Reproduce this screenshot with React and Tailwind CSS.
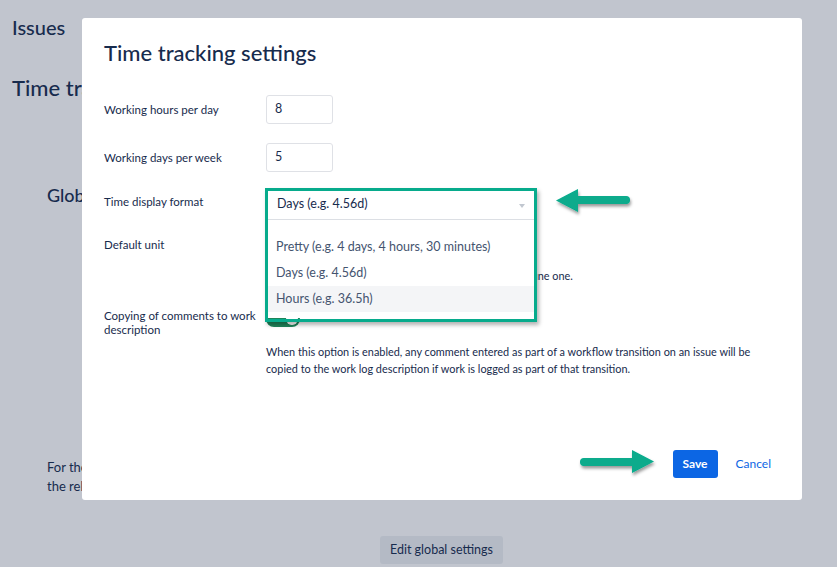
export default function App() {
  return (
    <div className="relative w-[837px] h-[567px] overflow-hidden bg-[#c1c5ce] text-[#172b4d] font-['Lato','Noto_Sans',sans-serif]">
      {/* Background page */}
      <div className="flex flex-col pl-[12px] pt-[14px]">
        <div className="text-[20px] leading-[26px] font-medium">Issues</div>
        <div className="mt-[34px] text-[22px] leading-[28px] font-medium">Time tracking</div>
        <div className="ml-[35px] mt-[81px] text-[18px] leading-[24px] font-medium">Global settings</div>
        <div className="ml-[35px] mt-[251px] text-[13px] leading-[19px]">
          <div>For these settings to take effect, reindexing may be required.</div>
          <div>the relevant projects use the global settings.</div>
        </div>
        <div className="ml-[368px] mt-[40px]">
          <button className="h-[28px] w-[123px] rounded-[3px] bg-[#b4bac5] text-[12.5px] text-[#172b4d] flex items-center justify-center">
            Edit global settings
          </button>
        </div>
      </div>

      {/* Modal */}
      <div className="absolute left-[82px] top-[18px] w-[720px] h-[482px] bg-white rounded-[3px] flex flex-col pl-[22px] pr-[31px] pb-[22px]">
        <div className="pt-[21px] text-[22px] leading-[28px] font-medium text-[#172b4d]">Time tracking settings</div>

        <div className="mt-[28px] flex flex-col text-[11.5px]">
          {/* Row 1 */}
          <div className="flex items-center">
            <div className="w-[162px]">Working hours per day</div>
            <div className="w-[67px] h-[29px] border border-[#dfe1e6] rounded-[3px] pl-[8px] flex items-center text-[12.5px]">8</div>
          </div>
          {/* Row 2 */}
          <div className="mt-[19px] flex items-center">
            <div className="w-[162px]">Working days per week</div>
            <div className="w-[67px] h-[29px] border border-[#dfe1e6] rounded-[3px] pl-[8px] flex items-center text-[12.5px]">5</div>
          </div>
          {/* Row 3 */}
          <div className="mt-[18px] flex items-start">
            <div className="w-[162px] pt-[5px] leading-[14px]">Time display format</div>
            <div className="relative w-[269px] h-[30px] bg-white border-b border-[#dcdfe4] flex items-center pl-[11px] text-[12.5px] text-[#172b4d]">
              Days (e.g. 4.56d)
              <div className="absolute right-[10px] top-[14px] w-0 h-0 border-l-[3.5px] border-r-[3.5px] border-t-[4px] border-l-transparent border-r-transparent border-t-[#c1c7d0]"></div>
              {/* Menu */}
              <div className="absolute left-0 top-[32px] w-[269px] bg-white pt-[12px] pb-[6px] flex flex-col text-[12.5px] text-[#44546f] z-10">
                <div className="h-[26px] flex items-center pl-[10px]">Pretty (e.g. 4 days, 4 hours, 30 minutes)</div>
                <div className="h-[26px] flex items-center pl-[10px]">Days (e.g. 4.56d)</div>
                <div className="h-[26px] flex items-center pl-[10px] bg-[#f4f5f7]">Hours (e.g. 36.5h)</div>
              </div>
            </div>
          </div>
          {/* Row 4 */}
          <div className="mt-[12px] flex items-start">
            <div className="w-[162px] pt-[6px] leading-[14px]">Default unit</div>
            <div className="flex flex-col">
              <div className="w-[269px] h-[29px] border border-[#dfe1e6] rounded-[3px] pl-[10px] flex items-center text-[12.5px]">Minutes</div>
              <div className="mt-[8px] leading-[14px] text-[10.85px] whitespace-nowrap">The default unit is for all time entered without a unit; define one.</div>
            </div>
          </div>
          {/* Row 5 */}
          <div className="mt-[26px] flex items-start">
            <div className="w-[162px] leading-[14px]">Copying of comments to work<br />description</div>
            <div className="flex flex-col">
              <div className="mt-[2px] w-[34px] h-[16px] rounded-full bg-[#1f845a] relative">
                <div className="absolute right-[2px] top-[2px] w-[12px] h-[12px] rounded-full bg-white"></div>
              </div>
              <div className="mt-[16px] text-[10.9px] leading-[17px] whitespace-nowrap">
                When this option is enabled, any comment entered as part of a workflow transition on an issue will be<br />
                copied to the work log description if work is logged as part of that transition.
              </div>
            </div>
          </div>
        </div>

        {/* Footer */}
        <div className="mt-auto flex items-center justify-end">
          <button className="w-[45px] h-[28px] rounded-[3px] bg-[#0c66e4] text-white text-[12px] font-bold flex items-center justify-center">Save</button>
          <button className="ml-[18px] text-[12px] text-[#0c66e4]">Cancel</button>
        </div>
      </div>

      {/* Annotation box */}
      <div className="absolute left-[265px] top-[188px] w-[272px] h-[134px] border-[3px] border-[#07ab8c] shadow-[2px_3px_4px_rgba(0,0,0,0.3)] z-20"></div>

      {/* Arrows */}
      <svg className="absolute left-0 top-0 z-20" width="837" height="567" viewBox="0 0 837 567">
        <defs>
          <filter id="sh" x="-20%" y="-50%" width="140%" height="200%">
            <feDropShadow dx="1" dy="2.5" stdDeviation="1.5" floodColor="#000" floodOpacity="0.4" />
          </filter>
        </defs>
        <g filter="url(#sh)" fill="#07ab8c">
          <line x1="576" y1="200" x2="626" y2="200" stroke="#07ab8c" strokeWidth="8" strokeLinecap="round" />
          <polygon points="556,200.5 578,189 578,212" />
        </g>
        <g filter="url(#sh)" fill="#07ab8c">
          <line x1="584" y1="462" x2="634" y2="462" stroke="#07ab8c" strokeWidth="8" strokeLinecap="round" />
          <polygon points="632,450 654,461.5 632,473" />
        </g>
      </svg>
    </div>
  );
}
